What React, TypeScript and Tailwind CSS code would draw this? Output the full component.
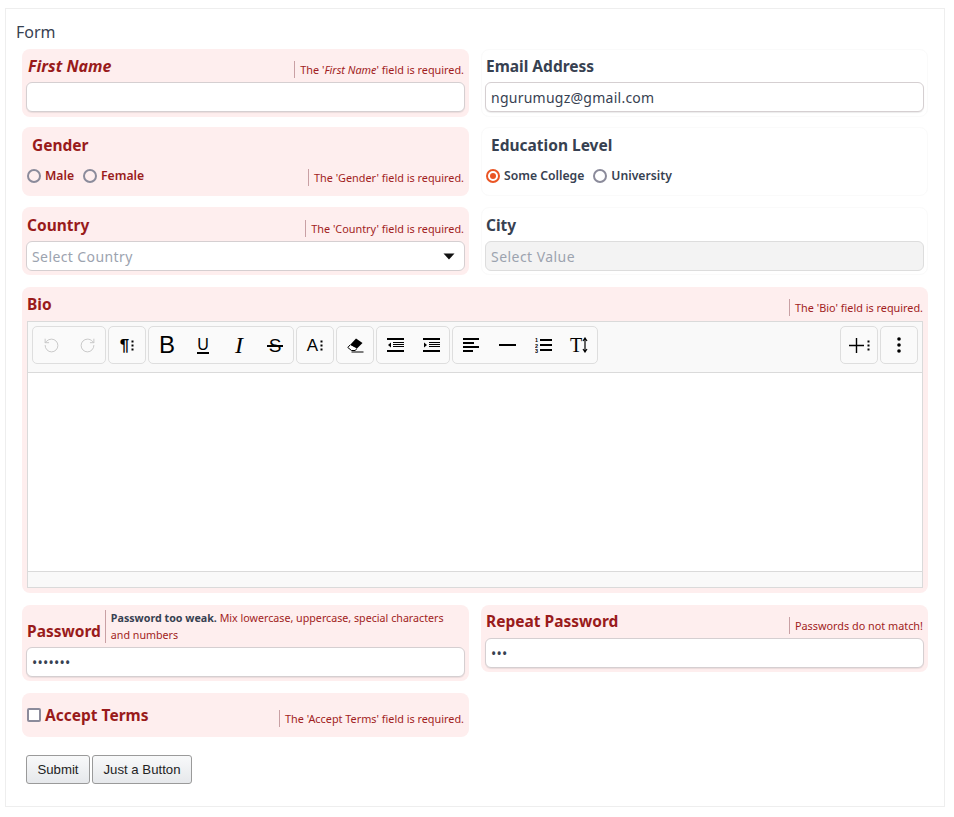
import React from 'react';
import { RotateCcw, RotateCw } from 'lucide-react';

const sans = "font-['Noto_Sans',sans-serif]";

const Err: React.FC<{ children: React.ReactNode; className?: string }> = ({ children, className }) => (
  <div className={`mr-px border-l border-[#c9a0a4] pl-[5px] text-[10.85px] leading-[17px] text-[#a11d22] ${className ?? ''}`}>{children}</div>
);

const TextBox: React.FC<{ value?: string; type?: string }> = ({ value = '', type = 'text' }) => (
  <input
    type={type}
    value={value}
    readOnly
    className="block h-[30px] w-full rounded-md border border-[#d5cfd1] bg-white px-[5px] text-sm tracking-[0.25px] text-[#374151] shadow-[0_1px_1px_rgba(0,0,0,0.08)] outline-none"
  />
);

const Radio: React.FC<{ label: string; checked?: boolean; error?: boolean }> = ({ label, checked, error }) => (
  <label className={`flex items-center gap-[4px] text-[12.2px] font-semibold ${error ? 'text-[#991b1b]' : 'text-[#374151]'}`}>
    <span className={`flex h-[14px] w-[14px] items-center justify-center rounded-full border-2 ${checked ? 'border-[#ea5524]' : 'border-[#8b8b9b]'}`}>
      {checked && <span className="h-[6px] w-[6px] rounded-full bg-[#ea5524]" />}
    </span>
    {label}
  </label>
);

const Btn: React.FC<{ children: React.ReactNode }> = ({ children }) => (
  <div className="flex h-[36px] w-[36px] items-center justify-center text-black">{children}</div>
);

const Group: React.FC<{ children: React.ReactNode }> = ({ children }) => (
  <div className="flex rounded-[5px] border border-[#dedede] bg-[#fafafa]">{children}</div>
);

const Dots: React.FC<{ className?: string }> = ({ className }) => (
  <svg width="3" height="11" viewBox="0 0 3 11" className={className}>
    <rect x="0.5" y="0.5" width="2" height="2" />
    <rect x="0.5" y="4.5" width="2" height="2" />
    <rect x="0.5" y="8.5" width="2" height="2" />
  </svg>
);

const Lines: React.FC<{ indent?: boolean; outdent?: boolean }> = ({ indent, outdent }) => (
  <svg width="17" height="14" viewBox="0 0 17 14">
    <rect x="0" y="0" width="17" height="2" />
    <rect x="6" y="4" width="11" height="1" />
    <rect x="6" y="6" width="11" height="1" />
    <rect x="6" y="8" width="11" height="1" />
    <rect x="0" y="12" width="17" height="2" />
    {outdent && <path d="M4 4.5 L1 7 L4 9.5 Z" />}
    {indent && <path d="M1 4.5 L4 7 L1 9.5 Z" />}
  </svg>
);

export default function App() {
  return (
    <div className={`${sans} px-[5px] pt-[8px] text-[#374151]`}>
      <div className="h-[799px] w-[940px] border border-[#eeeeee] bg-white pl-[10px] pt-[13px]">
        <div className="h-[27px] text-base leading-[20px] text-[#374151]">Form</div>
        <div className="ml-[6px] grid grid-cols-[447px_447px] items-start gap-x-[12px]">
          {/* row 1 */}
          <div className="h-[68px] rounded-lg bg-[#feeeee] p-[4px]">
            <div className="flex h-[29px] justify-between">
              <label className="pl-[2px] pt-[3px] text-base font-bold italic leading-[20px] text-[#991b1b]">First Name</label>
              <Err className="mt-[8px] h-[17px]">The '<em>First Name</em>' field is required.</Err>
            </div>
            <TextBox />
          </div>
          <div className="h-[68px] rounded-lg border border-[#fafafa] p-[3px]">
            <div className="h-[29px]">
              <label className="block pl-px pt-[3px] text-[15.5px] font-bold leading-[20px]">Email Address</label>
            </div>
            <TextBox value="ngurumugz@gmail.com" />
          </div>

          {/* row 2 */}
          <div className="mt-[10px] h-[69px] rounded-lg bg-[#feeeee] px-[4px] pt-[8px]">
            <label className="block pl-[6px] text-[15.5px] font-bold leading-[20px] text-[#991b1b]">Gender</label>
            <div className="mt-[12px] flex items-start justify-between">
              <div className="flex gap-[9px] pl-px">
                <Radio label="Male" error />
                <Radio label="Female" error />
              </div>
              <Err className="mt-[2px] h-[17px]">The 'Gender' field is required.</Err>
            </div>
          </div>
          <div className="mt-[10px] h-[69px] rounded-lg border border-[#fafafa] px-[4px] pt-[7px]">
            <label className="block pl-[5px] text-[15.5px] font-bold leading-[20px]">Education Level</label>
            <div className="mt-[12px] flex gap-[9px]">
              <Radio label="Some College" checked />
              <Radio label="University" />
            </div>
          </div>

          {/* row 3 */}
          <div className="mt-[11px] h-[68px] rounded-lg bg-[#feeeee] p-[4px]">
            <div className="flex h-[30px] justify-between">
              <label className="pl-px pt-[4px] text-[15.5px] font-bold leading-[20px] text-[#991b1b]">Country</label>
              <Err className="mt-[9px] h-[17px]">The 'Country' field is required.</Err>
            </div>
            <div className="flex h-[30px] items-center justify-between rounded-md border border-[#d5cfd1] bg-white pl-[5px] pr-[9px] pt-px text-sm tracking-[0.4px] text-[#9ca3af]">
              Select Country
              <svg width="12" height="7" viewBox="0 0 12 7"><path d="M0.5 0.5 H11.5 L6 6.5 Z" fill="#111" /></svg>
            </div>
          </div>
          <div className="mt-[11px] h-[68px] rounded-lg border border-[#fafafa] p-[3px]">
            <label className="block h-[30px] pl-px pt-[4px] text-[15.5px] font-bold leading-[20px]">City</label>
            <div className="flex h-[30px] items-center rounded-md border border-[#dddddd] bg-[#f3f3f3] px-[5px] pt-px text-sm tracking-[0.45px] text-[#9ca3af]">
              Select Value
            </div>
          </div>

          {/* bio */}
          <div className="col-span-2 mt-[12px] h-[306px] rounded-lg bg-[#feeeee] px-[5px]">
            <div className="-mr-px flex h-[34px] justify-between">
              <label className="pt-[7px] text-[15.5px] font-bold leading-[20px] text-[#991b1b]">Bio</label>
              <Err className="mt-[12px] h-[17px]">The 'Bio' field is required.</Err>
            </div>
            <div className="flex h-[267px] flex-col border border-[#dadada] bg-white">
              <div className="flex h-[51px] shrink-0 justify-between border-b border-[#dadada] bg-[#f9f9f9] px-[4px] pt-[4px]">
                <div className="flex h-[38px] gap-[2px]">
                  <Group>
                    <Btn><RotateCcw size={17} strokeWidth={1.4} color="#c8c8c8" /></Btn>
                    <Btn><RotateCw size={17} strokeWidth={1.4} color="#c8c8c8" /></Btn>
                  </Group>
                  <Group>
                    <Btn><span className="flex items-center gap-[2px] font-['Liberation_Sans',sans-serif] text-[17px] font-bold leading-none">¶<Dots /></span></Btn>
                  </Group>
                  <Group>
                    <Btn><span className="font-['Liberation_Sans',sans-serif] text-[24px] leading-none">B</span></Btn>
                    <Btn><span className="border-b-2 border-black font-['Liberation_Sans',sans-serif] text-[16px] leading-[15px]">U</span></Btn>
                    <Btn><span className="font-['Liberation_Serif',serif] text-[24px] italic leading-none">I</span></Btn>
                    <Btn>
                      <span className="relative font-['Liberation_Sans',sans-serif] text-[19px] leading-none">
                        S
                        <span className="absolute -left-[2px] -right-[2px] top-[9px] h-[2px] bg-black" />
                      </span>
                    </Btn>
                  </Group>
                  <Group>
                    <Btn><span className="flex items-center gap-[2px] font-['Liberation_Sans',sans-serif] text-[17px] leading-none">A<Dots /></span></Btn>
                  </Group>
                  <Group>
                    <Btn>
                      <svg width="17" height="15" viewBox="0 0 17 15">
                        <path d="M9 0.5 L15.5 5 L9.5 11 L3 7 Z" />
                        <path d="M3 7 L0.8 9.5 L4.5 12.5 L8 12.5 L10 10.6" fill="#fff" stroke="#000" strokeWidth="1" />
                        <path d="M4.5 14 H16.5" stroke="#000" strokeWidth="1" />
                      </svg>
                    </Btn>
                  </Group>
                  <Group>
                    <Btn><Lines outdent /></Btn>
                    <Btn><Lines indent /></Btn>
                  </Group>
                  <Group>
                    <Btn>
                      <svg width="16" height="14" viewBox="0 0 16 14">
                        <rect width="16" height="2" />
                        <rect y="4" width="11" height="2" />
                        <rect y="8" width="16" height="2" />
                        <rect y="12" width="10" height="2" />
                      </svg>
                    </Btn>
                    <Btn><svg width="17" height="2" viewBox="0 0 17 2"><rect width="17" height="2" /></svg></Btn>
                    <Btn>
                      <svg width="17" height="16" viewBox="0 0 17 16">
                        <text x="0" y="5" fontSize="5.5" fontFamily="Liberation Sans" fontWeight="700">1</text>
                        <text x="0" y="10.5" fontSize="5.5" fontFamily="Liberation Sans" fontWeight="700">2</text>
                        <text x="0" y="16" fontSize="5.5" fontFamily="Liberation Sans" fontWeight="700">3</text>
                        <rect x="5" y="2" width="12" height="2" />
                        <rect x="5" y="7" width="12" height="2" />
                        <rect x="5" y="12" width="12" height="2" />
                      </svg>
                    </Btn>
                    <Btn>
                      <span className="flex items-center font-['Liberation_Serif',serif] text-[20px] leading-none">
                        T
                        <svg width="6" height="16" viewBox="0 0 6 16">
                          <path d="M3 1 V15 M1 4 L3 1 L5 4 M1 12 L3 15 L5 12" fill="none" stroke="#000" strokeWidth="1.2" />
                        </svg>
                      </span>
                    </Btn>
                  </Group>
                </div>
                <div className="flex h-[38px] gap-[2px]">
                  <Group>
                    <Btn>
                      <span className="flex items-center gap-[3px]">
                        <svg width="15" height="15" viewBox="0 0 15 15"><path d="M7.5 0 V15 M0 7.5 H15" stroke="#000" strokeWidth="1.4" /></svg>
                        <Dots />
                      </span>
                    </Btn>
                  </Group>
                  <Group>
                    <Btn>
                      <svg width="4" height="16" viewBox="0 0 4 16">
                        <circle cx="2" cy="2" r="1.8" />
                        <circle cx="2" cy="8" r="1.8" />
                        <circle cx="2" cy="14" r="1.8" />
                      </svg>
                    </Btn>
                  </Group>
                </div>
              </div>
              <div className="flex-1" />
              <div className="h-[16px] border-t border-[#dadada] bg-[#f9f9f9]" />
            </div>
          </div>

          {/* passwords */}
          <div className="mt-[12px] h-[76px] rounded-lg bg-[#feeeee] px-[4px] pt-[5px]">
            <div className="mb-[4px] flex h-[33px] items-end">
              <label className="shrink-0 pb-[2px] pl-px pr-[4px] text-[15.5px] font-bold leading-[20px] text-[#991b1b]">Password</label>
              <div className="h-[33px] border-l border-[#c9a0a4] pl-[5px] text-[10.7px] leading-[17px] text-[#a11d22]">
                <strong className="text-[#374151]">Password too weak.</strong> Mix lowercase, uppercase, special characters and numbers
              </div>
            </div>
            <TextBox type="password" value="1234567" />
          </div>
          <div className="mt-[12px] h-[67px] rounded-lg bg-[#feeeee] p-[4px]">
            <div className="flex h-[29px] justify-between">
              <label className="pl-px pt-[2px] text-[15.5px] font-bold leading-[20px] text-[#991b1b]">Repeat Password</label>
              <Err className="mt-[8px] h-[17px]">Passwords do not match!</Err>
            </div>
            <TextBox type="password" value="123" />
          </div>

          {/* terms */}
          <div className="mt-[12px] flex h-[44px] items-start justify-between rounded-lg bg-[#feeeee] px-[4px]">
            <label className="flex items-center gap-[4px] pl-px pt-[12px] text-[15.5px] font-bold leading-[20px] text-[#991b1b]">
              <span className="h-[14px] w-[14px] rounded-[2px] border-2 border-[#8b8b9b] bg-white" />
              Accept Terms
            </label>
            <Err className="mt-[17px] h-[17px]">The 'Accept Terms' field is required.</Err>
          </div>
        </div>

        <div className="ml-[10px] mt-[18px] flex gap-[2px] font-['Liberation_Sans',sans-serif] text-[13.2px] text-[#222]">
          <button className="h-[29px] w-[64px] rounded-[3px] border border-[#9a9a9a] bg-gradient-to-b from-[#f8f9fa] to-[#e6e8eb]">Submit</button>
          <button className="h-[29px] w-[100px] rounded-[3px] border border-[#9a9a9a] bg-gradient-to-b from-[#f8f9fa] to-[#e6e8eb]">Just a Button</button>
        </div>
      </div>
    </div>
  );
}
